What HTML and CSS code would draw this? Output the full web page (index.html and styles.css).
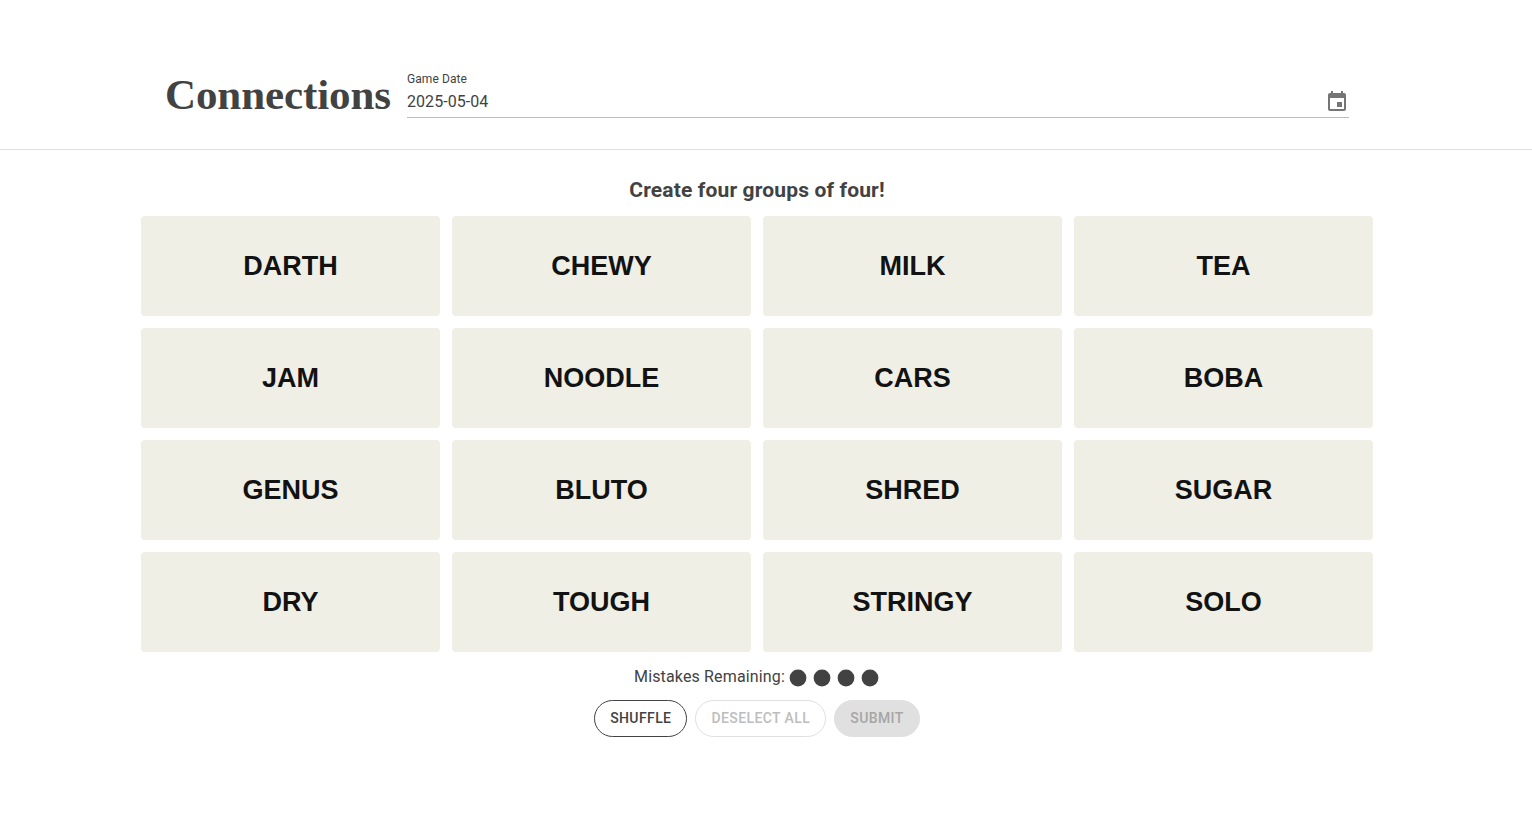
FILE: index.html
```html
<!DOCTYPE html>
<html lang="en">
<head>
<meta charset="utf-8">
<title>Connections</title>
<link rel="stylesheet" href="styles.css">
</head>
<body>
<header class="header">
  <h1 class="title">Connections</h1>
  <div class="field">
    <label class="label">Game Date</label>
    <div class="input"><span>2025-05-04</span>
      <svg class="calendar" viewBox="0 0 24 24"><path d="M17 12h-5v5h5v-5zM16 1v2H8V1H6v2H5c-1.11 0-1.99.9-1.99 2L3 19c0 1.1.89 2 2 2h14c1.1 0 2-.9 2-2V5c0-1.1-.9-2-2-2h-1V1h-2zm3 18H5V8h14v11z"/></svg>
    </div>
  </div>
</header>
<main class="game">
  <h2 class="prompt">Create four groups of four!</h2>
  <div class="grid">
    <div class="card">DARTH</div><div class="card">CHEWY</div><div class="card">MILK</div><div class="card">TEA</div>
    <div class="card">JAM</div><div class="card">NOODLE</div><div class="card">CARS</div><div class="card">BOBA</div>
    <div class="card">GENUS</div><div class="card">BLUTO</div><div class="card">SHRED</div><div class="card">SUGAR</div>
    <div class="card">DRY</div><div class="card">TOUGH</div><div class="card">STRINGY</div><div class="card">SOLO</div>
  </div>
  <div class="mistakes"><span>Mistakes Remaining:</span>
    <svg class="dots" viewBox="0 0 92 20"><circle cx="10" cy="10" r="8.4"/><circle cx="34" cy="10" r="8.4"/><circle cx="58" cy="10" r="8.4"/><circle cx="82" cy="10" r="8.4"/></svg>
  </div>
  <div class="actions">
    <button class="btn shuffle">SHUFFLE</button>
    <button class="btn deselect" disabled>DESELECT ALL</button>
    <button class="btn submit" disabled>SUBMIT</button>
  </div>
</main>
</body>
</html>
```
FILE: styles.css
```css
* { box-sizing: border-box; }
body { margin: 0; background: #fff; color: #424242; font-family: Roboto, sans-serif; }
.header { height: 150px; padding: 71px 183px 0 165px; display: flex; border-bottom: 1px solid #e0e0e0; }
.title { margin: 0; width: 242px; font: 700 43px/48px "Liberation Serif", serif; letter-spacing: -.1px; }
.field { flex: 1; height: 47px; border-bottom: 1px solid #bdbdbd; }
.label { display: block; font-size: 12px; line-height: 16px; letter-spacing: .08px; }
.input { display: flex; justify-content: space-between; font-size: 16px; line-height: 30px; letter-spacing: .05px; }
.calendar { width: 24px; height: 24px; margin-top: 3px; fill: #757575; }
.game { width: 1232px; margin-left: 141px; padding-top: 24px; }
.prompt { margin: 0; font-size: 21px; font-weight: 700; line-height: 32px; letter-spacing: .15px; text-align: center; }
.grid { display: grid; grid-template-columns: repeat(4, 1fr); grid-auto-rows: 100px; gap: 12px; margin-top: 10px; }
.card { display: flex; align-items: center; justify-content: center; background: #efefe6; border-radius: 4px; color: #121212; font: 700 27px/32px "Liberation Sans", sans-serif; }
.mistakes { display: flex; justify-content: center; height: 48px; padding-top: 13px; line-height: 24px; letter-spacing: .15px; }
.dots { width: 92px; height: 20px; margin: 3px 0 0 3px; fill: #424242; }
.actions { display: flex; justify-content: center; gap: 8px; }
.btn { height: 37px; padding: 0 15px 1px; border: 1px solid #424242; border-radius: 19px; background: #fff; color: #424242; font: 500 14px/24px Roboto, sans-serif; letter-spacing: .4px; }
.shuffle { width: 93px; padding-left: 14px; padding-right: 14px; }
.deselect { width: 131px; border-color: #e0e0e0; color: #bdbdbd; }
.submit { border-color: #e0e0e0; background: #e0e0e0; color: #a6a6a6; }
```
